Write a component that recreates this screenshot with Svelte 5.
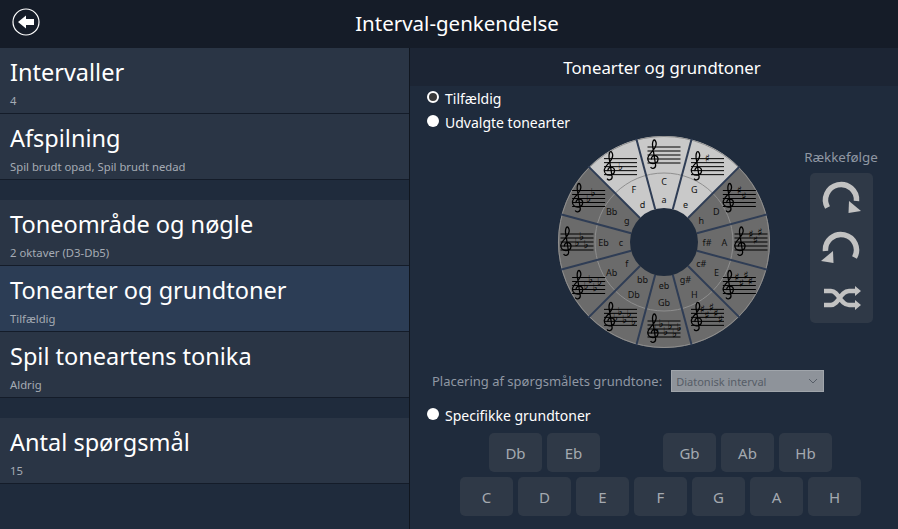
<script>
	const menu = [
		[
			{ title: 'Intervaller', sub: '4' },
			{ title: 'Afspilning', sub: 'Spil brudt opad, Spil brudt nedad' }
		],
		[
			{ title: 'Toneområde og nøgle', sub: '2 oktaver (D3-Db5)' },
			{ title: 'Tonearter og grundtoner', sub: 'Tilfældig', selected: true },
			{ title: 'Spil toneartens tonika', sub: 'Aldrig' }
		],
		[{ title: 'Antal spørgsmål', sub: '15' }]
	];

	const sharpY = [-8, -2, -10, -4, 2, -6];
	const flatY = [0, -6, 2, -4, 4, -2];

	// clockwise from the top
	const keys = [
		{ major: 'C', minor: 'a', sharps: 0, flats: 0, light: true },
		{ major: 'G', minor: 'e', sharps: 1, flats: 0, light: true },
		{ major: 'D', minor: 'h', sharps: 2, flats: 0 },
		{ major: 'A', minor: 'f#', sharps: 3, flats: 0 },
		{ major: 'E', minor: 'c#', sharps: 4, flats: 0 },
		{ major: 'H', minor: 'g#', sharps: 5, flats: 0 },
		{ major: 'Gb', minor: 'eb', sharps: 0, flats: 6 },
		{ major: 'Db', minor: 'bb', sharps: 0, flats: 5 },
		{ major: 'Ab', minor: 'f', sharps: 0, flats: 4 },
		{ major: 'Eb', minor: 'c', sharps: 0, flats: 3 },
		{ major: 'Bb', minor: 'g', sharps: 0, flats: 2 },
		{ major: 'F', minor: 'd', sharps: 0, flats: 1, light: true }
	];

	const C = 107;
	const OUTER = 106;
	const HOLE = 34;

	function polar(r, deg) {
		const a = ((deg - 90) * Math.PI) / 180;
		return [C + r * Math.cos(a), C + r * Math.sin(a)];
	}

	function wedge(i) {
		const [x1, y1] = polar(OUTER, i * 30 - 15);
		const [x2, y2] = polar(OUTER, i * 30 + 15);
		return `M${C} ${C}L${x1} ${y1}A${OUTER} ${OUTER} 0 0 1 ${x2} ${y2}Z`;
	}

	// longer key signatures start further left on the stave
	function accX(count, n) {
		const start = count > 3 ? -(count - 3) * 2.5 : 0;
		return start + n * 4.5;
	}

	const upper = ['Db', 'Eb', null, 'Gb', 'Ab', 'Hb'];
	const lower = ['C', 'D', 'E', 'F', 'G', 'A', 'H'];
</script>

<div class="page">
	<header>
		<button class="back" type="button" aria-label="Tilbage">
			<svg width="28" height="28" viewBox="0 0 28 28">
				<circle cx="14" cy="14" r="13" fill="none" stroke="#fff" stroke-width="1.2" />
				<path d="M6 14 L14 7.5 V11 H22 V17 H14 V20.5 Z" fill="#fff" />
			</svg>
		</button>
		<h1>Interval-genkendelse</h1>
	</header>

	<div class="main">
		<nav>
			{#each menu as group}
				<div class="group">
					{#each group as item}
						<div class="item" class:selected={item.selected}>
							<div class="title">{item.title}</div>
							<div class="sub">{item.sub}</div>
						</div>
					{/each}
				</div>
			{/each}
		</nav>

		<section>
			<h2>Tonearter og grundtoner</h2>

			<div class="radio"><span class="dot on"></span>Tilfældig</div>
			<div class="radio"><span class="dot"></span>Udvalgte tonearter</div>

			<div class="wheel-row">
				<svg class="wheel" width="214" height="214" viewBox="0 0 214 214">
					{#each keys as key, i}
						<path d={wedge(i)} fill={key.light ? '#c9c9c9' : '#6b6b6b'} />
					{/each}
					<circle cx={C} cy={C} r="69" fill="none" stroke="#8f8f8f" stroke-width="1" />
					<circle cx={C} cy={C} r={OUTER - 0.5} fill="none" stroke="#8f8f8f" stroke-width="1" />
					{#each keys as key, i}
						{@const a = polar(HOLE, i * 30 + 15)}
						{@const b = polar(OUTER + 1, i * 30 + 15)}
						<line x1={a[0]} y1={a[1]} x2={b[0]} y2={b[1]} stroke="#2f3d55" stroke-width="2" />
					{/each}
					<circle cx={C} cy={C} r={HOLE} fill="#1f2b3c" />

					{#each keys as key, i}
						{@const s = polar(87, i * 30)}
						{@const maj = polar(60.5, i * 30)}
						{@const min = polar(43, i * 30)}
						<g transform="translate({s[0]} {s[1]})">
							{#each [-8, -4, 0, 4, 8] as y}
								<line x1="-16.5" x2="16.5" y1={y} y2={y} stroke="#000" stroke-width="1" />
							{/each}
							<path
								transform="translate(-11 0)"
								d="M-1.5 4.5C-2 2 0 .5 1.5 .5C4 .5 5.2 2.5 5 4.5C4.8 7 2.5 8.5 0 8.5C-3 8.5-5.2 6.3-5.2 3.5C-5.2-1 2.8-5 3.2-11C3.3-13.5 2-15 1.3-15C0-15-.8-12-.4-9L2.6 10C3 13-1 14.5-2.4 12"
								fill="none"
								stroke="#000"
								stroke-width="1.3"
							/>
							{#each sharpY.slice(0, key.sharps) as y, n}
								<text class="acc" x={accX(key.sharps, n)} y={y}>♯</text>
							{/each}
							{#each flatY.slice(0, key.flats) as y, n}
								<text class="acc" x={accX(key.flats, n)} y={y}>♭</text>
							{/each}
						</g>
						<text class="note" x={maj[0]} y={maj[1]}>{key.major}</text>
						<text class="note" x={min[0]} y={min[1]}>{key.minor}</text>
					{/each}
				</svg>

				<div class="order">
					<div class="order-label">Rækkefølge</div>
					<div class="order-box">
						<svg width="44" height="44" viewBox="0 0 44 44">
							<path d="M8.5 31.5A15.5 15.5 0 1 1 37.5 25" fill="none" stroke="#c2c2c2" stroke-width="5.5" />
							<path d="M30 25 L42 35 L29.5 37 Z" fill="#c2c2c2" />
						</svg>
						<svg width="44" height="44" viewBox="0 0 44 44">
							<g transform="matrix(-1 0 0 1 44 0)">
								<path d="M8.5 31.5A15.5 15.5 0 1 1 37.5 25" fill="none" stroke="#c2c2c2" stroke-width="5.5" />
								<path d="M30 25 L42 35 L29.5 37 Z" fill="#c2c2c2" />
							</g>
						</svg>
						<svg width="44" height="44" viewBox="0 0 44 44">
							<path d="M5 15H12C20 15 21 29 30 29H37M5 29H12C20 29 21 15 30 15H37" fill="none" stroke="#c2c2c2" stroke-width="4.5" />
							<path d="M36 10L42 15L36 20ZM36 24L42 29L36 34Z" fill="#c2c2c2" />
						</svg>
					</div>
				</div>
			</div>

			<div class="placement">
				<span>Placering af spørgsmålets grundtone:</span>
				<div class="select">
					Diatonisk interval
					<svg width="10" height="6" viewBox="0 0 10 6"><path d="M1 1L5 5L9 1" fill="none" stroke="#565d67" stroke-width="1" /></svg>
				</div>
			</div>

			<div class="radio specific"><span class="dot"></span>Specifikke grundtoner</div>

			<div class="keys upper">
				{#each upper as label}
					{#if label}
						<button type="button" class="key">{label}</button>
					{:else}
						<span class="key-gap"></span>
					{/if}
				{/each}
			</div>
			<div class="keys">
				{#each lower as label}
					<button type="button" class="key">{label}</button>
				{/each}
			</div>
		</section>
	</div>
</div>

<style>
	:global(body) {
		margin: 0;
		background: #1f2b3c;
	}

	.page {
		width: 898px;
		height: 529px;
		overflow: hidden;
		display: flex;
		flex-direction: column;
		font-family: 'Noto Sans', 'Open Sans', sans-serif;
		color: #fff;
		background: #1f2b3c;
	}

	header {
		height: 48px;
		flex: none;
		background: #151c28;
		display: flex;
		align-items: center;
		justify-content: center;
		position: relative;
	}

	h1 {
		margin: 0 0 3px;
		font-size: 20.5px;
		font-weight: 400;
		padding-left: 16px;
	}

	.back {
		position: absolute;
		left: 12px;
		top: 8px;
		padding: 0;
		border: 0;
		background: none;
		height: 28px;
	}

	.main {
		flex: 1;
		display: flex;
		min-height: 0;
	}

	nav {
		width: 409px;
		flex: none;
		border-right: 1px solid #10161f;
		display: flex;
		flex-direction: column;
		gap: 20px;
	}

	.item {
		height: 65px;
		box-sizing: content-box;
		border-bottom: 1px solid #141c29;
		background: #2a3545;
		padding-left: 10px;
		overflow: hidden;
	}

	.item.selected {
		background: #2c3d55;
	}

	.title {
		font-size: 23.5px;
		line-height: 30px;
		margin-top: 9px;
		white-space: nowrap;
	}

	.sub {
		font-size: 11.3px;
		line-height: 14px;
		margin-top: 7px;
		color: #a5abb4;
	}

	section {
		flex: 1;
		min-width: 0;
	}

	h2 {
		margin: 0;
		height: 38px;
		line-height: 40px;
		text-align: center;
		font-size: 16.8px;
		font-weight: 400;
		background: #1c2534;
		padding-left: 16px;
	}

	.radio {
		display: flex;
		align-items: center;
		gap: 6px;
		height: 24px;
		font-size: 14px;
		padding-left: 17px;
	}

	.dot {
		width: 12px;
		height: 12px;
		border-radius: 50%;
		background: #fff;
		box-sizing: border-box;
		margin-top: -3px;
	}

	.dot.on {
		border: 2.5px solid #fff;
		background: #3a3a3a;
	}

	.wheel-row {
		display: flex;
		align-items: flex-start;
		padding-left: 147px;
		margin-top: 1px;
		height: 235px;
	}

	.wheel {
		flex: none;
		opacity: 0.999;
	}

	.note {
		font-size: 9px;
		fill: #111;
		text-anchor: middle;
		dominant-baseline: central;
	}

	.acc {
		font-family: 'DejaVu Sans', sans-serif;
		font-size: 11px;
		fill: #000;
		text-anchor: middle;
		dominant-baseline: central;
	}

	.order {
		margin-left: 35px;
		margin-top: 13px;
		display: flex;
		flex-direction: column;
		align-items: center;
		width: 70px;
	}

	.order-label {
		font-size: 13.4px;
		line-height: 18px;
		color: #8f97a3;
		white-space: nowrap;
	}

	.order-box {
		margin-top: 7px;
		width: 63px;
		height: 150px;
		border-radius: 5px;
		background: #2f3947;
		display: flex;
		flex-direction: column;
		align-items: center;
		justify-content: center;
		gap: 6px;
	}

	.placement {
		display: flex;
		align-items: center;
		gap: 9px;
		padding-left: 22px;
		height: 22px;
		font-size: 13px;
		color: #8f97a3;
	}

	.select {
		width: 153px;
		height: 22px;
		box-sizing: border-box;
		border: 1px solid #a0a5ab;
		background: #8e939a;
		color: #565d67;
		font-size: 11px;
		padding: 0 5px 0 4px;
		display: flex;
		align-items: center;
		justify-content: space-between;
	}

	.specific {
		margin-top: 11px;
	}

	.keys {
		display: flex;
		gap: 5px;
		padding-left: 50px;
		margin-top: 5px;
	}

	.keys.upper {
		padding-left: 79px;
		margin-top: 6px;
	}

	.key,
	.key-gap {
		width: 53px;
		height: 39px;
		flex: none;
	}

	.key {
		border: 0;
		padding: 0;
		border-radius: 5px;
		background: #2f3947;
		color: #a4a9b0;
		font-family: inherit;
		font-size: 15px;
	}
</style>
